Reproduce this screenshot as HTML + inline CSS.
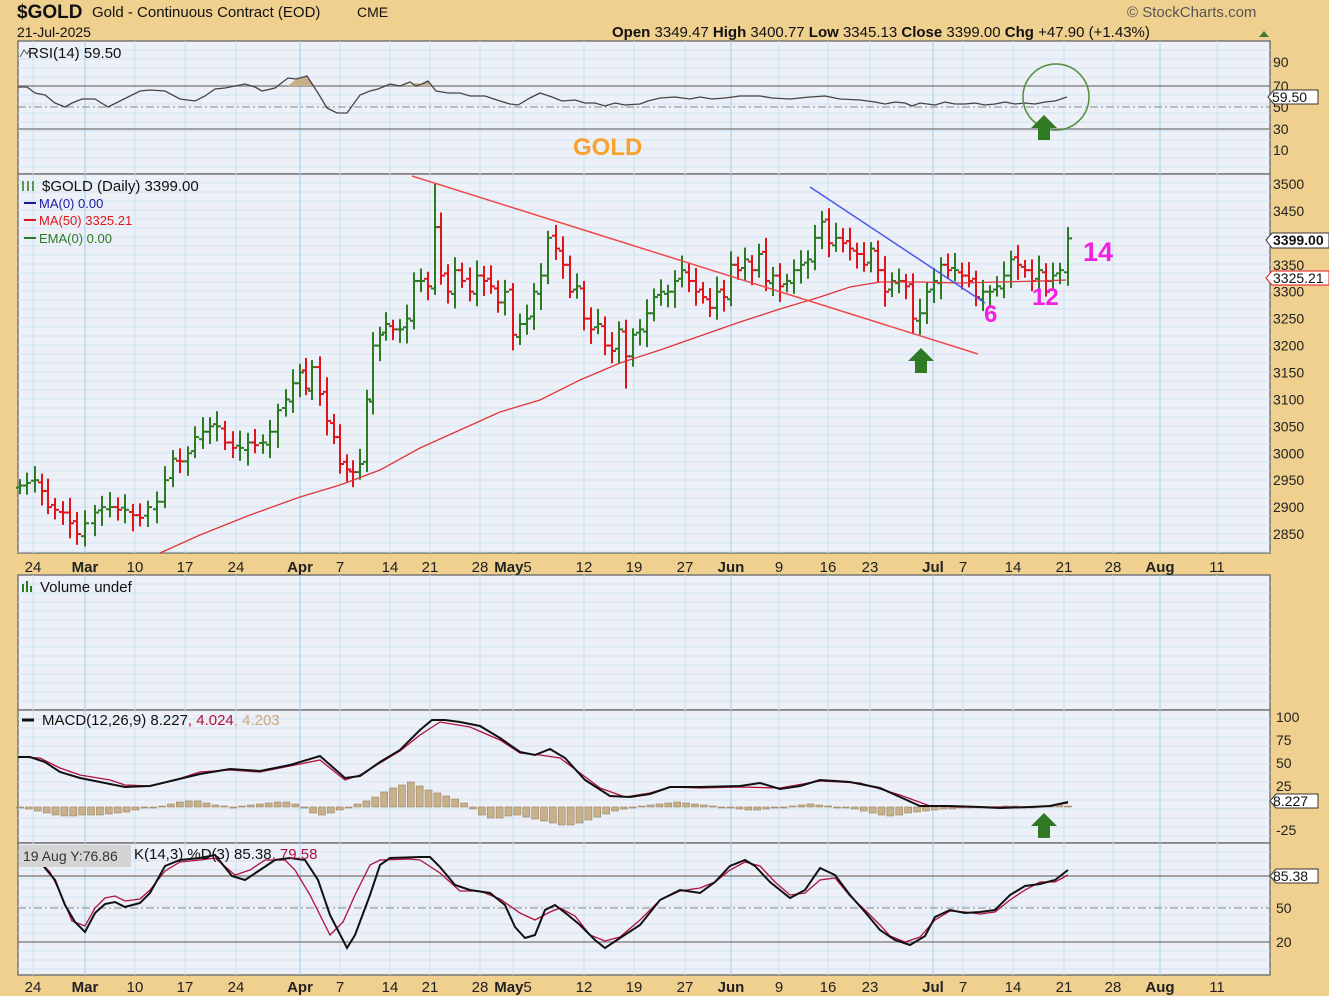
<!DOCTYPE html>
<html><head><meta charset="utf-8"><style>
html,body{margin:0;padding:0;background:#f0d08f;width:1329px;height:996px;overflow:hidden;font-family:"Liberation Sans",sans-serif}
svg{position:absolute;left:0;top:0}
</style></head><body>
<svg id="s" width="1329" height="996" xmlns="http://www.w3.org/2000/svg" font-family="Liberation Sans, sans-serif">
<rect x="0" y="0" width="1329" height="996" fill="#f0d08f"/>
<text x="17" y="18" font-size="19" font-weight="bold" fill="#111">$GOLD</text>
<text x="92" y="17" font-size="15" fill="#111">Gold - Continuous Contract (EOD)</text>
<text x="357" y="17" font-size="14" fill="#111">CME</text>
<text x="17" y="37" font-size="14" fill="#111">21-Jul-2025</text>
<text x="1127" y="17" font-size="15" fill="#555">© StockCharts.com</text>
<text x="612" y="37" font-size="15" fill="#111"><tspan font-weight="bold">Open</tspan> 3349.47 <tspan font-weight="bold">High</tspan> 3400.77 <tspan font-weight="bold">Low</tspan> 3345.13 <tspan font-weight="bold">Close</tspan> 3399.00 <tspan font-weight="bold">Chg</tspan> +47.90 (+1.43%)</text>
<polygon points="1259,37 1264,31 1269,37" fill="#3a7a3a"/>
<g id="g"></g>
</svg>
<script>
const G=document.getElementById('g');
let h='';
const X0=18,X1=1270;
const panels=[[41,174],[174,553],[575,710],[710,843],[843,975]];
panels.forEach(p=>{h+=`<rect x="${X0}" y="${p[0]}" width="${X1-X0}" height="${p[1]-p[0]}" fill="#eef0f8" stroke="#777" stroke-width="1.5"/>`;});
const vx=[33,85,135,185,236,300,340,390,430,480,513,584,634,685,731,779,828,870,933,963,1013,1064,1113,1160,1217];
const vl=['24','Mar','10','17','24','Apr','7','14','21','28','May5','12','19','27','Jun','9','16','23','Jul','7','14','21','28','Aug','11'];
const bold={'Mar':1,'Apr':1,'Jun':1,'Jul':1,'Aug':1};
panels.forEach(p=>{
 for(let yy=p[0]+9;yy<p[1];yy+=9)h+=`<line x1="${X0}" x2="${X1}" y1="${yy}" y2="${yy}" stroke="#cfe3f2" stroke-width="1"/>`;
 vx.forEach((x,i)=>{h+=`<line x1="${x}" x2="${x}" y1="${p[0]}" y2="${p[1]}" stroke="${bold[vl[i]]?'#9cd0ec':'#c4e4f2'}" stroke-width="1"/>`;});
});
[[572],[992]].forEach(([y])=>{vx.forEach((x,i)=>{let t=vl[i];let lab=t=='May5'?'<tspan font-weight="bold">May</tspan>5':t;h+=`<text x="${x}" y="${y}" font-size="15" text-anchor="middle" fill="#222" ${bold[t]?'font-weight="bold"':''}>${lab}</text>`;});});
h+=`<line x1="${X0}" x2="${X1}" y1="86" y2="86" stroke="#888" stroke-width="1.5"/><line x1="${X0}" x2="${X1}" y1="129" y2="129" stroke="#888" stroke-width="1.5"/><line x1="${X0}" x2="${X1}" y1="107" y2="107" stroke="#888" stroke-dasharray="8,3,2,3"/>`;
const rsi=[[18,87],[27,87],[35,93],[45,95],[55,103],[65,107],[72,103],[82,99],[95,99],[108,107],[120,101],[130,96],[140,91],[150,90],[165,91],[180,99],[195,101],[205,96],[215,89],[225,88],[235,86],[245,84],[255,87],[262,91],[275,88],[288,78],[296,79],[307,76],[318,93],[327,108],[337,113],[347,113],[360,95],[370,91],[378,89],[390,84],[400,86],[410,82],[416,86],[422,84],[428,81],[436,91],[448,93],[460,93],[470,96],[485,96],[500,101],[510,104],[518,105],[530,98],[540,93],[552,97],[562,101],[575,100],[585,103],[595,103],[605,106],[615,103],[625,105],[640,104],[648,101],[660,98],[675,97],[690,99],[700,97],[712,99],[725,98],[740,96],[760,96],[772,98],[790,99],[810,97],[825,96],[840,99],[860,100],[875,102],[885,104],[895,102],[905,103],[912,106],[920,103],[935,105],[945,102],[955,104],[965,104],[975,103],[985,105],[995,104],[1005,102],[1015,104],[1025,103],[1035,104],[1045,102],[1055,101],[1067,97]];
h+=`<polygon points="288,86 296,79 307,76 314,86" fill="#c8b08a"/><polygon points="407,86 416,83 422,84 428,81 431,86" fill="#c8b08a"/>`;
h+=`<polyline points="${rsi.map(p=>p.join(',')).join(' ')}" fill="none" stroke="#444" stroke-width="1.3"/>`;
h+=`<text x="28" y="58" font-size="15" fill="#111">RSI(14) 59.50</text><path d="M20 57 L24 50 L27 54 L30 49" stroke="#555" fill="none"/>`;
h+=`<text x="573" y="155" font-size="24" font-weight="bold" fill="#f7a22a">GOLD</text>`;
h+=`<circle cx="1056" cy="97" r="33" fill="none" stroke="#4f8f3a" stroke-width="1.5"/>`;
[[90,62],[70,86],[50,107],[30,129],[10,150]].forEach(([v,y])=>{h+=`<text x="1273" y="${y+5}" font-size="14" fill="#222">${v}</text>`;});
h+=`<path d="M1268 97 L1274 90 L1318 90 L1318 104 L1274 104 Z" fill="#fff" stroke="#333"/><text x="1272" y="102" font-size="14" fill="#111">59.50</text>`;
const py=p=>184+(3500-p)*0.5385;
for(let p=2850;p<=3500;p+=50){h+=`<text x="1273" y="${py(p)+5}" font-size="14" fill="#222">${p}</text>`;}
const cl=[[20,2940],[27,2945],[35,2950],[42,2930],[48,2900],[55,2895],[63,2890],[70,2870],[77,2850],[85,2870],[95,2890],[102,2900],[110,2900],[118,2895],[125,2895],[133,2885],[140,2880],[148,2900],[157,2910],[165,2950],[173,2990],[180,2985],[188,3000],[195,3030],[203,3040],[210,3050],[217,3050],[225,3020],[233,3010],[240,3010],[248,3020],[255,3015],[263,3020],[270,3040],[278,3080],[286,3100],[293,3130],[300,3150],[306,3120],[312,3160],[320,3110],[327,3060],[334,3030],[340,2980],[347,2970],[353,2965],[360,2980],[367,3100],[373,3200],[380,3220],[386,3240],[393,3230],[400,3230],[407,3250],[414,3320],[421,3320],[428,3310],[435,3420],[441,3330],[448,3300],[455,3340],[462,3320],[470,3300],[477,3330],[484,3320],[491,3310],[498,3280],[505,3300],[513,3220],[520,3240],[527,3250],[534,3300],[541,3330],[548,3400],[556,3380],[563,3350],[570,3300],[577,3310],[584,3250],[591,3230],[598,3240],[605,3200],[612,3190],[619,3230],[626,3180],[633,3220],[640,3230],[647,3260],[654,3290],[661,3300],[668,3300],[675,3320],[682,3340],[689,3320],[696,3300],[703,3290],[710,3270],[717,3300],[724,3290],[731,3350],[738,3340],[745,3360],[752,3340],[759,3370],[766,3320],[773,3330],[780,3310],[787,3320],[794,3340],[801,3350],[808,3360],[815,3400],[822,3430],[829,3390],[836,3400],[843,3390],[850,3380],[857,3370],[864,3350],[871,3380],[878,3340],[885,3300],[892,3320],[899,3320],[906,3310],[913,3250],[920,3260],[927,3300],[934,3320],[941,3350],[948,3340],[955,3340],[962,3330],[969,3320],[976,3290],[983,3300],[990,3300],[997,3310],[1004,3330],[1011,3360],[1018,3350],[1025,3340],[1032,3320],[1039,3340],[1046,3320],[1053,3330],[1060,3340],[1068,3399]];
let prev=cl[0][1];
cl.forEach(([x,c],i)=>{let o=prev+(i%3-1)*4;let hi=Math.max(o,c)+12+(i*7%17),lo=Math.min(o,c)-12-(i*5%19);let col=c>=prev?'#2c7a24':'#e0151b';
if(x==435){hi=3500;} if(x==822)hi=3450;if(x==626)lo=3120;if(x==920)lo=3220;if(x==77)lo=2830;
h+=`<g stroke="${col}" stroke-width="2"><line x1="${x}" x2="${x}" y1="${py(hi)}" y2="${py(lo)}"/><line x1="${x-4}" x2="${x}" y1="${py(o)}" y2="${py(o)}"/><line x1="${x}" x2="${x+4}" y1="${py(c)}" y2="${py(c)}"/></g>`;prev=c;});
h+=`<polyline points="160,553 200,535 250,515 300,497 340,485 380,470 420,448 460,430 500,412 540,400 580,380 620,363 660,350 700,336 740,322 780,309 820,297 850,287 880,282 920,282 960,283 1000,282 1040,281 1066,280" fill="none" stroke="#e0353a" stroke-width="1.3"/>`;
h+=`<line x1="412" y1="176" x2="978" y2="354" stroke="#ef4a4a" stroke-width="1.5"/>`;
h+=`<line x1="810" y1="187" x2="985" y2="303" stroke="#4a55f0" stroke-width="1.5"/>`;
h+=`<text x="984" y="322" font-size="24" font-weight="bold" fill="#f020e0">6</text><text x="1032" y="305" font-size="24" font-weight="bold" fill="#f020e0">12</text><text x="1083" y="261" font-size="27" font-weight="bold" fill="#f020e0">14</text>`;
const arrow=(cx,ty)=>`<path d="M${cx} ${ty} L${cx+13} ${ty+13} L${cx+6} ${ty+13} L${cx+6} ${ty+25} L${cx-6} ${ty+25} L${cx-6} ${ty+13} L${cx-13} ${ty+13} Z" fill="#2f7a22"/>`;
h+=arrow(921,348)+arrow(1044,115)+arrow(1044,813);
h+=`<text x="42" y="191" font-size="15" fill="#111">$GOLD (Daily) 3399.00</text><path d="M23 181 V191 M28 181 V191 M33 181 V191" stroke="#2c7a24" stroke-width="1.5"/>`;
h+=`<line x1="24" x2="36" y1="203" y2="203" stroke="#1a1aa0" stroke-width="2"/><text x="39" y="208" font-size="13" fill="#1a1aa0">MA(0) 0.00</text>`;
h+=`<line x1="24" x2="36" y1="220" y2="220" stroke="#e0151b" stroke-width="2"/><text x="39" y="225" font-size="13" fill="#e0151b">MA(50) 3325.21</text>`;
h+=`<line x1="24" x2="36" y1="238" y2="238" stroke="#2c7a24" stroke-width="2"/><text x="39" y="243" font-size="13" fill="#2c7a24">EMA(0) 0.00</text>`;
h+=`<path d="M1266 240 L1272 233 L1329 233 L1329 248 L1272 248 Z" fill="#fff" stroke="#333"/><text x="1273" y="245" font-size="14" font-weight="bold" fill="#111">3399.00</text>`;
h+=`<path d="M1266 278 L1272 271 L1329 271 L1329 285 L1272 285 Z" fill="#fff" stroke="#e0151b"/><text x="1273" y="283" font-size="14" fill="#111">3325.21</text>`;
h+=`<text x="40" y="592" font-size="15" fill="#111">Volume undef</text><path d="M23 592 V584 M27 592 V581 M31 592 V586" stroke="#2c7a24" stroke-width="2"/>`;
h+=`<text x="42" y="725" font-size="15" fill="#111">MACD(12,26,9) 8.227<tspan fill="#b01040">, 4.024</tspan><tspan fill="#c8a878">, 4.203</tspan></text><line x1="22" x2="34" y1="720" y2="720" stroke="#111" stroke-width="3"/>`;
[[100,717],[75,740],[50,763],[25,786],[-25,830]].forEach(([v,y])=>{h+=`<text x="1276" y="${y+5}" font-size="14" fill="#222">${v}</text>`;});
const z=807;
let hs=[0,-2,-4,-6,-8,-9,-9,-8,-8,-8,-7,-6,-5,-3,-1,0,1,3,5,6,6,4,2,1,0,1,2,3,4,5,5,3,-1,-6,-8,-6,-3,-1,3,6,10,15,19,22,25,21,17,14,11,8,4,-2,-8,-11,-11,-9,-8,-10,-12,-14,-16,-18,-18,-16,-13,-10,-7,-4,-2,-1,1,2,3,4,5,4,3,2,1,0,-1,-2,-3,-3,-2,-1,0,1,2,3,2,1,0,-1,-2,-4,-6,-8,-9,-8,-6,-5,-4,-3,-2,-2,-1,-1,-1,0,0,1,1,0,0,1,1,2,1];
const step=(1068-20)/(hs.length-1);
hs.forEach((v,i)=>{let x=20+i*step;let y=v>0?z-v:z;h+=`<rect x="${x-3.5}" y="${y}" width="7" height="${Math.max(Math.abs(v),1)}" fill="#c8b08a" stroke="#9a8464" stroke-width="0.6"/>`;});
h+=`<polyline points="18,757 40,758 60,768 80,775 110,780 125,785 150,786 175,780 200,772 230,770 260,772 290,766 320,760 345,780 360,775 380,763 400,751 420,735 440,722 470,727 500,740 520,753 540,755 560,758 580,773 600,788 625,797 650,793 670,787 700,788 740,787 780,788 820,781 860,783 900,795 930,806 960,807 1000,807 1040,807 1068,803" fill="none" stroke="#b01040" stroke-width="1.3"/>`;
h+=`<polyline points="18,757 30,757 45,762 60,772 80,778 110,784 125,787 150,786 175,780 200,774 230,769 260,771 290,765 320,756 345,778 360,776 380,762 400,750 420,730 432,720 445,720 460,722 480,726 500,738 520,752 535,755 550,749 565,758 585,780 610,796 630,797 650,794 670,787 700,787 740,786 760,783 780,789 800,786 820,780 850,782 880,788 900,797 920,806 950,806 980,807 1000,808 1030,807 1050,806 1068,802" fill="none" stroke="#111" stroke-width="2"/>`;
h+=`<path d="M1270 801 L1276 794 L1318 794 L1318 808 L1276 808 Z" fill="#fff" stroke="#333"/><text x="1273" y="806" font-size="14" fill="#111">8.227</text>`;
h+=`<line x1="${X0}" x2="${X1}" y1="876" y2="876" stroke="#888" stroke-width="1.5"/><line x1="${X0}" x2="${X1}" y1="942" y2="942" stroke="#888" stroke-width="1.5"/><line x1="${X0}" x2="${X1}" y1="908" y2="908" stroke="#888" stroke-dasharray="8,3,2,3"/>`;
[[50,908],[20,942]].forEach(([v,y])=>{h+=`<text x="1276" y="${y+5}" font-size="14" fill="#222">${v}</text>`;});
h+=`<polyline points="40,862 50,872 60,892 72,921 85,926 95,908 105,898 115,896 125,901 140,899 150,890 165,871 180,862 200,860 215,858 235,875 250,870 265,860 285,860 295,870 310,895 330,935 343,922 355,895 370,865 380,860 410,859 420,860 440,873 460,891 480,891 500,899 520,913 535,920 550,912 560,908 575,916 590,935 605,941 620,937 640,920 660,900 680,891 700,888 715,882 730,870 745,862 760,866 775,882 790,895 805,893 820,880 835,878 850,896 865,910 880,925 890,936 905,942 920,937 935,920 950,911 965,912 980,914 995,912 1010,900 1025,890 1040,882 1055,882 1068,875" fill="none" stroke="#b01040" stroke-width="1.3"/>`;
h+=`<polyline points="40,862 45,868 55,880 65,905 75,922 85,932 95,913 105,904 115,902 125,907 140,903 150,893 165,866 180,860 200,858 215,855 232,876 245,880 260,870 275,860 290,858 305,860 318,880 330,915 347,948 355,935 370,895 380,865 390,858 420,857 430,857 440,867 455,885 470,890 490,893 505,905 515,927 525,938 535,935 545,910 555,905 568,915 580,925 595,940 605,948 620,938 640,925 660,900 680,890 700,893 715,882 730,866 745,860 755,866 770,882 790,898 805,890 820,868 835,875 850,895 865,912 880,930 895,940 910,945 925,936 935,917 950,910 965,913 980,912 995,910 1010,895 1025,886 1040,884 1055,880 1068,870" fill="none" stroke="#111" stroke-width="2"/>`;
h+=`<rect x="19" y="845" width="112" height="22" fill="#d4d4d4"/><text x="23" y="861" font-size="14" fill="#333">19 Aug Y:76.86</text>`;
h+=`<text x="134" y="859" font-size="15" fill="#111">K(14,3) %D(3) 85.38<tspan fill="#b01040">, 79.58</tspan></text>`;
h+=`<path d="M1270 876 L1276 869 L1318 869 L1318 883 L1276 883 Z" fill="#fff" stroke="#333"/><text x="1273" y="881" font-size="14" fill="#111">85.38</text>`;
G.innerHTML=h;
</script>
</body></html>
